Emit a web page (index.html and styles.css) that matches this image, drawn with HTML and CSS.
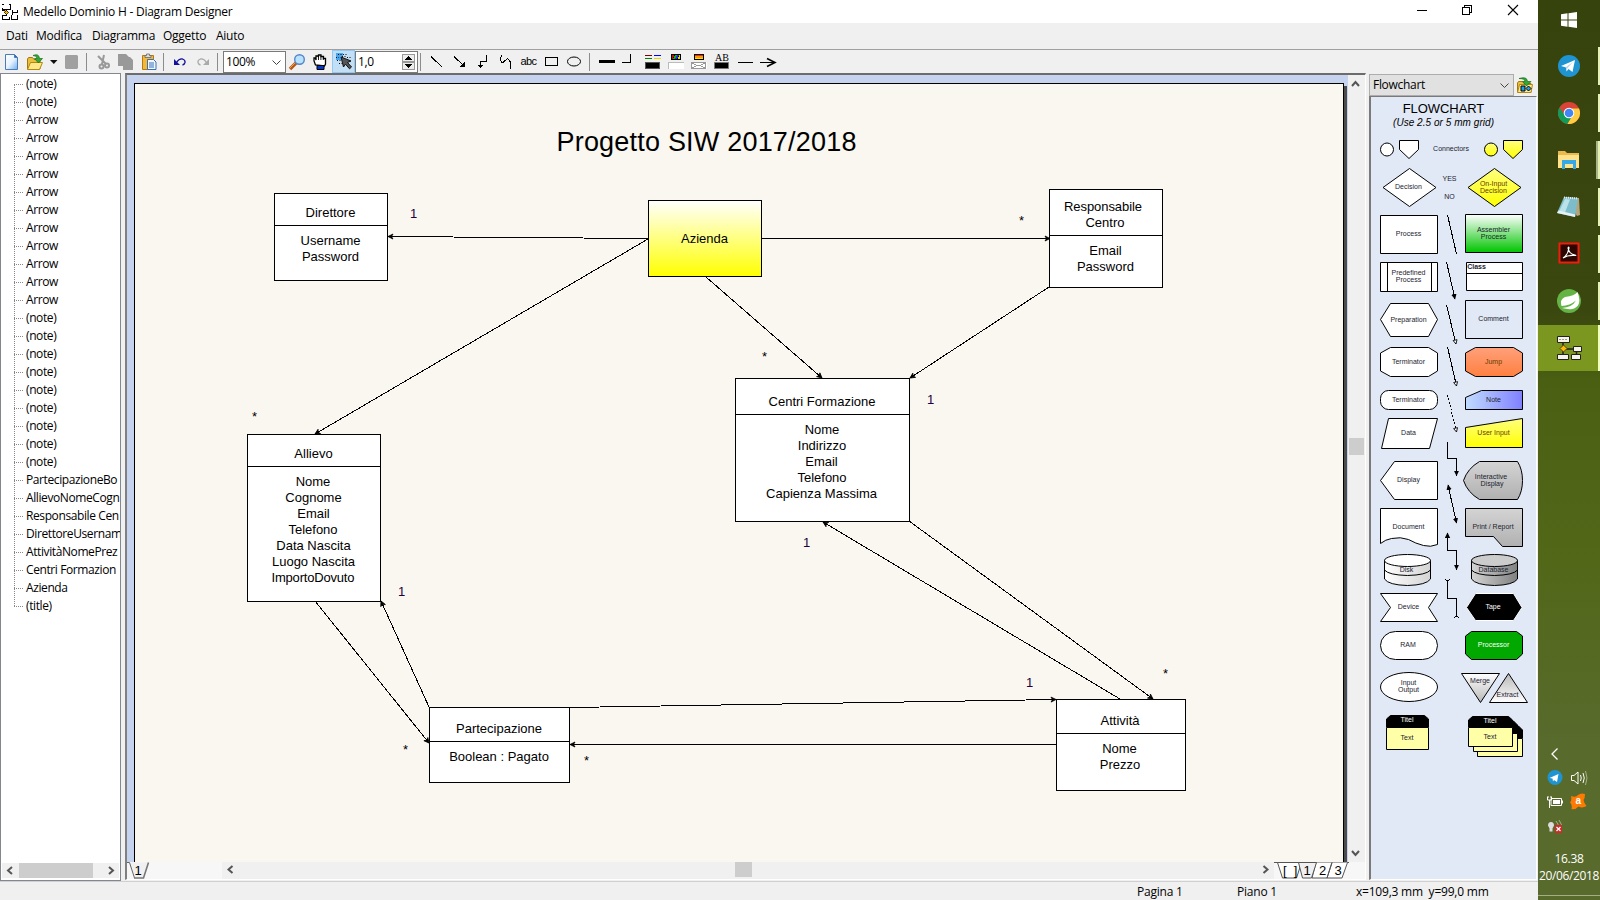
FILE: index.html
```html
<!DOCTYPE html>
<html lang="it">
<head>
<meta charset="utf-8">
<title>Medello Dominio H - Diagram Designer</title>
<link rel="stylesheet" href="styles.css">
</head>
<body>
<div class="window">
  <header class="titlebar">
    <svg class="app-icon" viewBox="0 0 20 22" shape-rendering="crispEdges"><path d="M2 3.500h2M9 3.500h1.500v5M2.500 7v2.500h3M6 12.500v2h-3.500v4h7v-3M12.500 9v5M13 11.500h4.500v-3M11.500 14v4.500h6v-4h-1M2 8.500h8" fill="none" stroke="#000"/><path d="M6 8.500l2.500 2.500-2.500 2.500-2.500-2.500z" fill="#f5b800" stroke="#000" stroke-width=".7"/></svg>
    <span class="title-text">Medello Dominio H - Diagram Designer</span>
    <svg class="controls" viewBox="1400 0 138 23" fill="none" stroke="#000" shape-rendering="crispEdges"><path d="M1417 10.500h10M1462.500 7.500h7v7h-7zM1464.500 7v-1.500h7v7h-2"/><path d="M1508 5l10 10M1518 5l-10 10" shape-rendering="auto" stroke-width="1.100"/></svg>
  </header>
  <nav class="menubar"><span class="m1">Dati</span><span class="m2">Modifica</span><span class="m3">Diagramma</span><span class="m4">Oggetto</span><span class="m5">Aiuto</span></nav>
  <div class="toolbar">
    <svg width="23" height="23" viewBox="0 50 23 23"><defs><linearGradient id="doc" x2="1" y2="1"><stop stop-color="#fff"/><stop offset=".5" stop-color="#e6f2ff"/><stop offset="1" stop-color="#6fb0ee"/></linearGradient></defs><path d="M5.500 54.500h9l3 3v12h-12z" fill="url(#doc)" stroke="#4a7ab8"/><path d="M14.500 54.500v3h3" fill="#2f68b0" stroke="#4a7ab8"/></svg>
    <svg width="23" height="23" viewBox="23 50 23 23"><path d="M27.500 69v-10l1-1.500h4l1.500 2h6v9.500z" fill="#e9bf3e" stroke="#a87708"/><path d="M27.500 69.500l3-7h12l-3 7z" fill="#ffe88a" stroke="#b58612"/><path d="M33 55.500q6-2.500 6.500 3h3l-4 4.500-4-4.500h2.500q0-3-4-3z" fill="#35a535" stroke="#13701a" stroke-width=".7"/></svg>
    <svg width="14" height="23" viewBox="46 50 14 23"><path d="M50 60h7.500l-3.700 4z" fill="#111"/></svg>
    <svg width="23" height="23" viewBox="60 50 23 23"><path d="M66 55h11l1 1v12l-1 1h-11l-1-1v-12z" fill="#a0a0a0"/></svg>
    <svg class="sep" width="9" height="23" viewBox="83 50 9 23"><path d="M86.500 53v18"/></svg>
    <svg width="23" height="23" viewBox="92 50 23 23" fill="none" stroke="#999" stroke-width="2"><path d="M98 56l8 8M104 55l-2 9"/><circle cx="101.500" cy="66.500" r="2"/><circle cx="107" cy="65.500" r="2"/></svg>
    <svg width="23" height="23" viewBox="115 50 23 23"><path d="M118 54h8l3 3h1l3 3v10h-10v-4h-5z" fill="#999"/></svg>
    <svg width="22" height="23" viewBox="138 50 22 23"><path d="M142.500 55.500h11v14h-11z" fill="#f1b83a" stroke="#b37913"/><path d="M145 57.500v-2h1.500v-1.500h3v1.500h1.500v2z" fill="#ddd" stroke="#666" stroke-width=".8"/><path d="M147.500 59.500h6l2.500 2.500v7.500h-8.500z" fill="#eef6ff" stroke="#3970b8"/><path d="M149 63h5M149 65h5M149 67h5" stroke="#3970b8"/></svg>
    <svg class="sep" width="9" height="23" viewBox="160 50 9 23"><path d="M163.500 53v18"/></svg>
    <svg width="23" height="23" viewBox="169 50 23 23"><path d="M174 59v6h6z" fill="#12129a"/><path d="M176.500 62.500q2.500-4 6-3.500 3 1 2.500 3.500-.5 2-2.500 2.500" fill="none" stroke="#12129a" stroke-width="1.300"/></svg>
    <svg width="22" height="23" viewBox="192 50 22 23"><path d="M209 59v6h-6z" fill="#aaa"/><path d="M206.500 62.500q-2.500-4-6-3.500-3 1-2.500 3.500 .5 2 2.500 2.500" fill="none" stroke="#aaa" stroke-width="1.300"/></svg>
    <svg class="sep" width="9" height="23" viewBox="214 50 9 23"><path d="M217.500 53v18"/></svg>
    <div class="zoom-box"><span>100%</span><svg width="11" height="7" viewBox="0 0 11 7"><path d="M1.500 1.500l4 4 4-4" fill="none" stroke="#444"/></svg></div>
    <svg width="23" height="23" viewBox="286 50 23 23"><path d="M290 69l6-6" stroke="#b4591a" stroke-width="3.400"/><path d="M290 68l6-6" stroke="#f0a04a" stroke-width="1"/><circle cx="299.500" cy="59.500" r="4.800" fill="#b9e2ff" stroke="#5585c8" stroke-width="1.400"/></svg>
    <svg width="23" height="23" viewBox="309 50 23 23"><path d="M315.500 65l-1.500-4v-3h1.500l.500 2v-4h2l.500 1v-2h2.500v1.500h2.500v2h2v5.500l-1 2z" fill="#fff" stroke="#000" stroke-width="1.300"/><path d="M318.500 56v4M320.900 56v4M323.300 57v3" stroke="#000" stroke-width=".9"/><path d="M317 65.500h7v4h-7z" fill="#0038c8" stroke="#000"/></svg>
    <svg class="pressed" width="23" height="23" viewBox="332 50 23 23"><path d="M336 53h7v7h-7z" fill="#47a7ee"/><path d="M338 54.500h10M336 57.500h3M337 60.500h4M339 63.500h4M347 57.500h4M342 56.500h4" stroke="#111" stroke-dasharray="1 1.500" fill="none"/><path d="M341 57l10 4-3.500 1.500 4 4.500-2 1.800-4-4.600-2 2.800z" fill="#555" stroke="#111"/></svg>
    <div class="spin"><span>1,0</span><svg width="13" height="16" viewBox="0 0 13 16" shape-rendering="crispEdges"><path d="M.5.500h12v7h-12zM.5 8.500h12v7h-12z" fill="#ededed" stroke="#999"/><path d="M3 6h7l-3.500-4zM3 10h7l-3.500 4z"/></svg></div>
    <svg class="sep" width="7" height="23" viewBox="418 50 7 23"><path d="M420.500 53v18"/></svg>
    <svg class="line" width="23" height="23" viewBox="425 50 23 23"><path d="M431 56.500l11 10.500"/></svg>
    <svg class="line" width="23" height="23" viewBox="448 50 23 23"><path d="M454 56.500l10 9.500"/><path d="M465 61v6h-6z" fill="#000" stroke="none"/></svg>
    <svg class="line" width="23" height="23" viewBox="471 50 23 23"><path d="M486.500 55v6.500h-6v5"/><path d="M477.500 64.500h6l-3 4z" fill="#000" stroke="none"/></svg>
    <svg class="line" width="23" height="23" viewBox="494 50 23 23"><path d="M501.500 55l-1 5 1 2h2l4-3.500 2.500 3v7"/></svg>
    <svg width="23" height="23" viewBox="517 50 23 23"><text x="520.500" y="65" class="abc" textLength="16.500">abc</text></svg>
    <svg class="line" width="23" height="23" viewBox="540 50 23 23"><path d="M545.500 57.500h12v8h-12z"/></svg>
    <svg class="line smooth" width="23" height="23" viewBox="563 50 23 23"><ellipse cx="574" cy="61.500" rx="6.500" ry="4.500"/></svg>
    <svg class="sep" width="9" height="23" viewBox="586 50 9 23"><path d="M589.500 53v18"/></svg>
    <svg width="23" height="23" viewBox="595 50 23 23"><path d="M599 60h16v3h-16z"/></svg>
    <svg class="line" width="23" height="23" viewBox="618 50 23 23"><path d="M622 62.500h8.500v-8.500"/></svg>
    <svg width="23" height="23" viewBox="641 50 23 23" shape-rendering="crispEdges"><path d="M645 55.500h7" stroke="#800000"/><path d="M654 55.500h7" stroke="#00f"/><path d="M645 58.500h7" stroke="#008000"/><path d="M654 58.500h7" stroke="#e8d800"/><path d="M645.500 62.500h14v6h-14z" stroke="#555"/></svg>
    <svg width="23" height="23" viewBox="664 50 23 23" shape-rendering="crispEdges"><path d="M671 54h10v6h-10z"/><path d="M672 55h2l-1 4h-1z" fill="#d00"/><path d="M675 55h2l-2 4h-2z" fill="#0b0"/><path d="M677 55h2l-2 4h-2z" fill="#22f"/><path d="M679 55h1v4h-2z" fill="#dd0"/><path d="M668 62h16v7h-16z" fill="#fff"/><path d="M668 62.500h16M668.500 62v7" stroke="#bbb"/></svg>
    <svg width="23" height="23" viewBox="687 50 23 23" shape-rendering="crispEdges"><path d="M694.500 54.500h9v5h-9z" fill="#f90" stroke="#000"/><path d="M695 55h8v1h-8z" fill="#e22"/><path d="M695 58h8v1h-8z" fill="#fd0"/><path d="M691 62h16v7h-16z" fill="#fff"/><path d="M691.500 62.500h14v6h-14zM692 63l5 2.500-5 2.500M705 63l-5 2.500 5 2.500M697 65.500h4" fill="none" stroke="#999"/></svg>
    <svg width="23" height="23" viewBox="710 50 23 23"><text x="715" y="61" class="serif-ab" textLength="14">AB</text><path d="M714.500 62.500h14v6h-14z" stroke="#777"/></svg>
    <svg class="line" width="23" height="23" viewBox="733 50 23 23"><path d="M738 62.500h15"/></svg>
    <svg class="line" width="23" height="23" viewBox="756 50 23 23"><path d="M760 62.500h14"/><path d="M767 58.500l8 4-8 4" stroke-width="1.600" shape-rendering="auto"/></svg>
  </div>
  <main class="workspace">
    <aside class="tree">
      <ul>
        <li>(note)</li><li>(note)</li>
        <li>Arrow</li><li>Arrow</li><li>Arrow</li><li>Arrow</li><li>Arrow</li><li>Arrow</li><li>Arrow</li><li>Arrow</li><li>Arrow</li><li>Arrow</li><li>Arrow</li>
        <li>(note)</li><li>(note)</li><li>(note)</li><li>(note)</li><li>(note)</li><li>(note)</li><li>(note)</li><li>(note)</li><li>(note)</li>
        <li>PartecipazioneBo</li><li>AllievoNomeCogn</li><li>Responsabile Cen</li><li>DirettoreUsernam</li><li>AttivitàNomePrez</li><li>Centri Formazion</li><li>Azienda</li><li>(title)</li>
      </ul>
      <div class="hbar"><svg width="17" height="15"><path d="M10 4l-4 3.500 4 3.500" class="chev"/></svg><i class="thumb"></i><svg class="end" width="17" height="15"><path d="M7 4l4 3.500-4 3.500" class="chev"/></svg></div>
    </aside>
    <section class="canvas">
      <div class="canvas-row">
        <svg class="diagram" width="1221" height="787" viewBox="127 75 1221 787">
          <defs>
            <linearGradient id="yel" x2="0" y2="1"><stop stop-color="#fff"/><stop offset="1" stop-color="#ff0"/></linearGradient>
            <marker id="arr" viewBox="0 0 8 8" refX="7" refY="4" markerWidth="8" markerHeight="8" markerUnits="userSpaceOnUse" orient="auto"><path d="M2 1.500l5 2.500-5 2.500 1.500-2.500z" stroke="#000" stroke-width=".8"/></marker>
          </defs>
          <path d="M1344 86h3v776h-3z" fill="#4c4c4c"/>
          <path d="M134.500 863v-779.500h1209v779.500" fill="#faf7f0" stroke="#000" shape-rendering="crispEdges"/>
          <text class="heading" x="706.500" y="151" textLength="300">Progetto SIW 2017/2018</text>
          <g class="links">
            <path d="M648 238.500L388 236.500"/><path d="M762 238.500H1050"/><path d="M648 239L315 434"/><path d="M706 277L822 378"/><path d="M1049 287L910 378"/><path d="M909 521L1153 699"/><path d="M1120 699L823 522"/><path d="M315 601L429 743"/><path d="M429 707L381 601"/><path d="M570 707.500L1056 699.500"/><path d="M1056 744.500H570"/>
          </g>
          <g class="nodes">
            <path d="M274.500 193.500h113v87h-113zM274.500 225.500h113"/>
            <path d="M648.500 200.500h113v76h-113z" fill="url(#yel)"/>
            <path d="M1049.500 189.500h113v98h-113zM1049.500 235.500h113"/>
            <path d="M735.500 378.500h174v143h-174zM735.500 414.500h174"/>
            <path d="M247.500 434.500h133v167h-133zM247.500 466.500h133"/>
            <path d="M429.500 707.500h140v75h-140zM429.500 741.500h140"/>
            <path d="M1056.500 699.500h129v91h-129zM1056.500 733.500h129"/>
          </g>
          <g class="labels">
            <text x="330.500" y="217">Direttore</text><text x="330.500" y="245">Username</text><text x="330.500" y="261">Password</text>
            <text x="704.500" y="243">Azienda</text>
            <text x="1103" y="211" textLength="78">Responsabile</text><text x="1105" y="227">Centro</text><text x="1105.500" y="255">Email</text><text x="1105.500" y="271">Password</text>
            <text x="822" y="406">Centri Formazione</text><text x="822" y="434">Nome</text><text x="822" y="450">Indirizzo</text><text x="821.500" y="466">Email</text><text x="822" y="482">Telefono</text><text x="821.500" y="498" textLength="111">Capienza Massima</text>
            <text x="313.500" y="458">Allievo</text><text x="313" y="486">Nome</text><text x="313.500" y="502">Cognome</text><text x="313.500" y="518">Email</text><text x="313" y="534">Telefono</text><text x="313.500" y="550">Data Nascita</text><text x="313.500" y="566">Luogo Nascita</text><text x="313" y="582" textLength="83">ImportoDovuto</text>
            <text x="499" y="733">Partecipazione</text><text x="499" y="761">Boolean : Pagato</text>
            <text x="1120" y="725">Attività</text><text x="1119.500" y="753">Nome</text><text x="1120" y="769">Prezzo</text>
            <g fill="#200040"><text x="413.500" y="218">1</text><text x="930.500" y="404">1</text><text x="401.500" y="596">1</text><text x="1029.500" y="687">1</text><text x="806.500" y="547">1</text></g>
            <text x="1021.500" y="225">*</text><text x="764.500" y="361">*</text><text x="254.500" y="421">*</text><text x="405.500" y="754">*</text><text x="586.500" y="765">*</text><text x="1165.500" y="678">*</text>
          </g>
        </svg>
        <div class="vbar"><svg width="17" height="17"><path d="M4 11l3.500-4 3.500 4" class="chev"/></svg><i class="thumb"></i><svg class="end" width="17" height="17"><path d="M4 6l3.500 4 3.500-4" class="chev"/></svg></div>
      </div>
      <div class="canvas-foot">
        <svg width="95" height="17" viewBox="127 862 95 17"><path d="M127 862.500h2l5.500 15.500h8l5.500-15.500z" fill="#f0f0f0"/><path d="M127 862.500h2.500l5 15.500" fill="none" stroke="#666"/><path d="M134 878h9.500l5-15.500" fill="none" stroke="#777" stroke-width="1.600"/><text class="tab" x="134.500" y="875">1</text></svg>
        <div class="hbar"><svg width="17" height="17"><path d="M10.500 4l-4 3.500 4 3.500" class="chev"/></svg><i class="thumb"></i><svg class="end" width="17" height="17"><path d="M6.500 4l4 3.500-4 3.500" class="chev"/></svg></div>
        <svg width="91" height="17" viewBox="1274 862 91 17" fill="#fff" stroke="#555"><path d="M1274 862.500h75"/><path d="M1277.500 862.500l5 15.500h14l5-15.500zM1316 862.500l-4 15.500h15l5-15.500M1332 862.500l-5 15.500h15l5.500-15.500"/><path d="M1298.500 862.500l4 15.500h9l5-15.500z" fill="#f0f0f0"/><g fill="#000" stroke="none"><text class="tab" x="1283" y="875">[&#160; ]</text><text class="tab" x="1303.500" y="875">1</text><text class="tab" x="1319" y="875">2</text><text class="tab" x="1334.500" y="875">3</text></g></svg>
      </div>
    </section>
    <aside class="palette">
      <div class="palette-head"><div class="select"><span>Flowchart</span><svg width="11" height="7" viewBox="0 0 11 7"><path d="M1.500 1.500l4 4 4-4" fill="none" stroke="#444"/></svg></div>
        <svg width="24" height="22" viewBox="1514 73 24 22"><path d="M1517.500 91v-9l1-1.500h4l1.500 2h7v9z" fill="#e9bf3e" stroke="#a87708"/><path d="M1517.500 91.500l2-8h13l-1.500 8z" fill="#ffe88a" stroke="#b58612"/><path d="M1519 77.500q8-2.500 8.500 3h3.500l-4.500 4.500-4-4.500h2.500q0-3-6-3z" fill="#35a535" stroke="#13701a" stroke-width=".7"/><path d="M1521 85h4v5h-4z" fill="#18a0f0" stroke="#000"/><path d="M1528.500 85l2.500 2.500-2.500 2.500-2.500-2.500z" fill="#18a0f0" stroke="#000"/></svg></div>
      <div class="palette-body">
        <svg width="165" height="783" viewBox="1371 97 165 783">
          <defs>
            <linearGradient id="yl2" x2="0" y2="1"><stop stop-color="#ffff80"/><stop offset="1" stop-color="#ff0"/></linearGradient>
            <linearGradient id="grn" x2="0" y2="1"><stop stop-color="#fff"/><stop offset="1" stop-color="#00c400"/></linearGradient>
            <linearGradient id="org" x2="0" y2="1"><stop stop-color="#ffa07a"/><stop offset="1" stop-color="#ff8040"/></linearGradient>
            <linearGradient id="blu"><stop stop-color="#c0dcff"/><stop offset="1" stop-color="#8080ff"/></linearGradient>
            <linearGradient id="gry" x2="0" y2="1"><stop stop-color="#d4d4d4"/><stop offset="1" stop-color="#b0b0b0"/></linearGradient>
            <linearGradient id="dsk"><stop stop-color="#fff"/><stop offset="1" stop-color="#d4d4d4"/></linearGradient>
            <linearGradient id="dbs"><stop stop-color="#d4d4d4"/><stop offset="1" stop-color="#808080"/></linearGradient>
            <linearGradient id="mrg" x2="0" y2="1"><stop stop-color="#fff"/><stop offset="1" stop-color="#b8b8b8"/></linearGradient>
            <linearGradient id="ext" x2="0" y2="1"><stop stop-color="#b8b8b8"/><stop offset="1" stop-color="#fff"/></linearGradient>
            <marker id="pa" viewBox="0 0 6 6" refX="5" refY="3" markerWidth="6" markerHeight="6" markerUnits="userSpaceOnUse" orient="auto-start-reverse"><path d="M0 .3l5.500 2.700-5.500 2.700z"/></marker>
            <marker id="po" viewBox="0 0 6 6" refX="5" refY="3" markerWidth="6" markerHeight="6" markerUnits="userSpaceOnUse" orient="auto"><path d="M1 1l4 2-4 2z" fill="#fff" stroke="#000" stroke-width=".8"/></marker>
          </defs>
          <text x="1443.500" y="112.500" class="p-title" textLength="81.500">FLOWCHART</text>
          <text x="1443.500" y="126" class="p-sub" textLength="101">(Use 2.5 or 5 mm grid)</text>
          <g class="shapes">
            <circle cx="1387" cy="149.500" r="6.500"/><path d="M1399.500 140.500h19v9l-9.500 9-9.500-9z"/>
            <circle cx="1491" cy="149.500" r="6.500" fill="url(#yl2)"/><path d="M1503.500 140.500h19v9l-9.500 9-9.500-9z" fill="url(#yl2)"/>
            <path d="M1409.500 168.500l26.500 19-26.500 19-26.500-19z"/><path d="M1494.500 168.500l26.500 19-26.500 19-26.500-19z" fill="url(#yl2)"/>
            <path d="M1380.500 215.500h57v38h-57z"/><path d="M1465.500 214.500h57v38h-57z" fill="url(#grn)"/>
            <path d="M1380.500 262.500h57v29h-57zM1387.500 262.500v29M1431.500 262.500v29"/><path d="M1466.500 262.500h56v28h-56zM1466.500 273.500h56"/>
            <path d="M1390.500 303.500h38l9 16-9 17h-38l-10-17z"/><path d="M1465.500 300.500h57v38h-57z" fill="none"/>
            <path d="M1390.500 347.500h38l9 5.500v18l-9 5.500h-38l-10-5.500v-18z"/><path d="M1475.500 347.500h38l9 5.500v18l-9 5.500h-38l-10-5.500v-18z" fill="url(#org)"/>
            <rect x="1380.500" y="390.500" width="57" height="19" rx="8"/><path d="M1465.500 409.500v-12l16-7h41v19z" fill="url(#blu)"/>
            <path d="M1388.500 418.500h49l-8 30h-48z"/><path d="M1465.500 447.500v-20l57-9v29z" fill="url(#yl2)"/>
            <path d="M1380.500 480.500l14-19h43v38h-43z"/><path d="M1463.500 480.500q4-12 16-19h38q5 8 5 19t-5 19h-38q-12-7-16-19z" fill="url(#gry)"/>
            <path d="M1380.500 508.500h57v36q-7 3-14 1-8-2-15-6-8-3-17-1-6 1-11 5z"/><path d="M1465.500 508.500h57v38h-20l-9-10h-28z" fill="url(#gry)"/>
            <path d="M1384.500 560v19q4 6 23 6.500 19-.5 23-6.500v-19z" fill="url(#dsk)"/><ellipse cx="1407.500" cy="560.500" rx="23" ry="6"/><path d="M1384.500 570q4 5 23 5.500 19-.5 23-5.500" fill="none"/>
            <path d="M1471.500 560v19q4 6 23 6.500 19-.5 23-6.500v-19z" fill="url(#dbs)"/><ellipse cx="1494.500" cy="560.500" rx="23" ry="6" fill="#ccc"/><path d="M1471.500 570q4 5 23 5.500 19-.5 23-5.500" fill="none"/>
            <path d="M1380.500 593.500h57l-9 14 9 14h-57l10-14z"/><path d="M1475.500 593.500h38l8.500 14-8.500 13h-38l-9-13z" fill="#000" stroke="#fff"/>
            <rect x="1380.500" y="631.500" width="57" height="28" rx="15"/><path d="M1471.500 631.500h45l6 4.500v18l-6 5.500h-45l-6-5.500v-18z" fill="#00a800"/>
            <ellipse cx="1409" cy="687" rx="28.500" ry="14.500"/><path d="M1461.500 673.500h38l-19 29z" fill="url(#mrg)"/><path d="M1508.500 673.500l19 29h-38z" fill="url(#ext)"/>
            <path d="M1386.500 727v-8l4-3.500h34l4 3.500v8z" fill="#000"/><path d="M1386.500 727.500h42v22h-42z" fill="#ffffa8"/>
            <path d="M1477.500 738v-12h41l4 4v8z" fill="#000"/><path d="M1477.500 738.500h45v18h-45z" fill="#ffffa8"/>
            <path d="M1473.500 733v-12h40l4 4v8z" fill="#000"/><path d="M1473.500 733.500h44v18h-44z" fill="#ffffa8"/>
            <path d="M1468.500 727v-7l4-3.500h36l4 3.500v8z" fill="#000"/><path d="M1468.500 727.500h44v19h-44z" fill="#ffffa8"/>
          </g>
          <g class="conn">
            <path d="M1447.500 215l9 39"/><path d="M1446.500 262l8.500 37" marker-end="url(#pa)"/><path d="M1446.500 305l9.500 39" marker-end="url(#po)"/><path d="M1447.500 347l9 39" marker-end="url(#po)"/><path d="M1447.500 395l9 37" stroke-dasharray="2 1.500" marker-end="url(#po)"/>
            <path d="M1447.500 442v16.500h9v17" marker-end="url(#pa)"/><path d="M1448 485l8.500 38" marker-start="url(#pa)" marker-end="url(#pa)"/><path d="M1447.500 533v17.500h9v19" marker-start="url(#pa)" marker-end="url(#pa)"/><path d="M1447.500 580v18.500h9v18M1445.500 579l2 3 2-3M1454.500 618l2-3 2 3"/>
          </g>
          <g class="p-labels">
            <text x="1451" y="151">Connectors</text><text x="1449.500" y="181">YES</text><text x="1449.500" y="199">NO</text>
            <text x="1408.500" y="189">Decision</text><text x="1493.500" y="186" class="brown">On-Input</text><text x="1493.500" y="193" class="brown">Decision</text>
            <text x="1408.500" y="236">Process</text><text x="1493.500" y="232">Assembler</text><text x="1493.500" y="239">Process</text>
            <text x="1408.500" y="275">Predefined</text><text x="1408.500" y="282">Process</text><text x="1476.500" y="269" class="bold">Class</text>
            <text x="1408.500" y="322">Preparation</text><text x="1493.500" y="321">Comment</text><text x="1408.500" y="364">Terminator</text><text x="1493.500" y="364" class="brown">Jump</text>
            <text x="1408.500" y="402">Terminator</text><text x="1493.500" y="402">Note</text><text x="1408.500" y="435">Data</text><text x="1493.500" y="435" class="brown">User Input</text>
            <text x="1408.500" y="482">Display</text><text x="1491" y="479">Interactive</text><text x="1492" y="486">Display</text><text x="1408.500" y="529">Document</text><text x="1493" y="529">Print / Report</text>
            <text x="1406.500" y="572">Disk</text><text x="1493.500" y="572">Database</text><text x="1408.500" y="609">Device</text><text x="1493" y="609" class="inv">Tape</text>
            <text x="1408" y="647">RAM</text><text x="1493.500" y="647" class="inv">Processor</text><text x="1408.500" y="685">Input</text><text x="1408.500" y="692">Output</text>
            <text x="1480" y="683">Merge</text><text x="1507.500" y="697">Extract</text>
            <text x="1407" y="722" class="inv">Titel</text><text x="1407" y="740">Text</text><text x="1490" y="723" class="inv">Titel</text><text x="1490" y="739">Text</text>
          </g>
        </svg>
      </div>
    </aside>
  </main>
  <footer class="statusbar"><span class="s1">Pagina 1</span><span class="s2">Piano 1</span><span class="s3">x=109,3 mm&nbsp; y=99,0 mm</span></footer>
</div>
<aside class="taskbar">
  <div class="start"><svg width="18" height="18" viewBox="0 0 18 18" fill="#fff"><path d="M1 3.300l6.500-1v6.200h-6.500zM8.500 2.200l8.500-1.200v7.500h-8.500zM1 9.500h6.500v6.200l-6.500-1zM8.500 9.500h8.500v7.500l-8.500-1.200z"/></svg></div>
  <div class="task"><svg width="24" height="24" viewBox="0 0 24 24"><circle cx="12" cy="12" r="11" fill="#1e94d2"/><path d="M4 12l14-6-2.500 12-4-3-2 2.500-.5-4z" fill="#fff"/><path d="M9 13l7-5-5.500 6-1 3z" fill="#b5d5e8"/></svg></div>
  <div class="task"><svg width="24" height="24" viewBox="0 0 24 24"><circle cx="12" cy="12" r="11" fill="#da4437"/><path d="M2.500 6.500a11 11 0 0 0 8 16.400l5-8.400-7.500 0z" fill="#119b58"/><path d="M22 7.500a11 11 0 0 1-11.500 15.400l5-8.600-.5-6.800z" fill="#ffcd42"/><circle cx="12" cy="12" r="5.300" fill="#fff"/><circle cx="12" cy="12" r="4.300" fill="#4285f4"/></svg></div>
  <div class="task multi"><svg width="24" height="24" viewBox="0 0 24 24"><path d="M1 3h7l2 2h12v15h-21z" fill="#ecb94f"/><path d="M1 7h21v13h-21z" fill="#ffe28a"/><path d="M5 21v-9h14v9h-3v-5h-8v5z" fill="#34a9e6"/></svg></div>
  <div class="task"><svg width="24" height="24" viewBox="0 0 24 24"><path d="M7 2l15 1 1 17-3 1z" fill="#b3a67c"/><path d="M7 2l14 1-3 19-18-4z" fill="#7dbccb"/><path d="M8 4l5 .5-5 13-6-1z" fill="#b9e3e8"/><path d="M0 18l18 4 .5-2.500-17-4z" fill="#e7f0f2"/><path d="M7 2.500l14 1" stroke="#e8e8e8" stroke-dasharray="1 1" stroke-width="2"/></svg></div>
  <div class="task adobe"><svg width="22" height="22" viewBox="0 0 22 22"><path d="M1.500 1.500h19v19h-19z" fill="#2c0600" stroke="#f21c0d" stroke-width="2"/><path d="M5 16q5-3 6-10 0-2-1 0 1 6 7 7 2 .500-1 .500-6-.500-11 2.500" fill="none" stroke="#fff" stroke-width="1.200"/></svg></div>
  <div class="task"><svg width="26" height="26" viewBox="0 0 26 26"><circle cx="13" cy="13" r="12" fill="#65b345"/><path d="M21.500 4q3.500 9 .5 13.500-3.500 4.500-10 3.500-4-.5-6-1 10-.5 14-7.500-6 5-14.500 5.500-2-6.500 3.500-9 9.500-1 12.500-5z" fill="#fff"/></svg></div>
  <div class="task active"><svg width="26" height="26" viewBox="0 0 26 26"><g fill="#f7f4e8" stroke="#222"><path d="M1.500 1.500h12v6h-12zM17.500 11.500h8v5h-8zM1.500 19.500h11v5h-11zM15.500 19.500h9v5h-9z"/></g><path d="M7 7v12M10 14h7M20.500 17v3" stroke="#222" stroke-width="1.500"/><path d="M7.500 10l3.500 3.500-3.500 3.500-3.500-3.500z" fill="#fb0" stroke="#542"/><path d="M3 4.500h9" stroke="#999" stroke-dasharray="2 1"/></svg></div>
  <div class="tray">
    <svg width="62" height="96" viewBox="1538 742 62 96">
      <path d="M1557.500 748.500l-5.500 5.500 5.500 5.500" fill="none" stroke="#fff" stroke-width="1.300"/>
      <circle cx="1555" cy="777.500" r="7.500" fill="#1e94d2"/><path d="M1549.500 778l9-4-1.500 8-3-2-1 1.500-.5-3z" fill="#fff"/>
      <path d="M1571.500 775.500h2.500l4-3.500v12l-4-3.500h-2.500zM1580.500 775q1.500 3 0 6M1583 773q2.500 5 0 10" fill="none" stroke="#fff"/><path d="M1585.500 771q3 7 0 14" fill="none" stroke="#a7b08c"/>
      <path d="M1551 798.500h10.500v7h-10.500zM1562.500 800.500v3M1547.500 797v3h4v-3M1549.500 800v8M1548 796v2M1551 796v2" fill="none" stroke="#fff"/><path d="M1553 800h7v4h-7z" fill="#fff"/>
      <path d="M1571 796q5 2 7-1 3-2.500 7-1 0 4-1.500 6 .5 3 3 6-4 2.500-8 .5-3 3.500-7 2.500 1-4-1.500-6.500 2-2.500 1-6.500z" fill="#ff7a00"/><text x="1575.500" y="804" class="avast">a</text>
      <path d="M1551 822q3 0 3 3.500l-1.500 3v3h-3v-3l-1.500-3q0-3.500 3-3.500z" fill="#ddd"/><path d="M1556 821q3 3 2 7M1559 820q4 5 2 9" fill="none" stroke="#a7b08c"/><path d="M1555 825h7v8h-7z" fill="#d32626"/><path d="M1556.500 827l4 4M1560.500 827l-4 4" stroke="#fff" stroke-width="1.300"/>
    </svg>
    <div class="clock"><span>16.38</span><span>20/06/2018</span></div>
    <div class="show-desktop"></div>
  </div>
</aside>
</body>
</html>
```

FILE: styles.css
```css
* { box-sizing: border-box; }
body {
  margin: 0;
  width: 1600px;
  height: 900px;
  overflow: hidden;
  display: flex;
  font: 12px/18px "Open Sans", "Noto Sans", sans-serif;
  color: #000;
}
svg { display: block; flex: none; }

.window {
  width: 1538px;
  height: 900px;
  display: flex;
  flex-direction: column;
  background: #f0f0f0;
  white-space: nowrap;
}
.titlebar { height: 23px; flex: none; display: flex; align-items: center; background: #fff; }
.app-icon { width: 20px; height: 22px; }
.title-text { margin-left: 3px; letter-spacing: -0.24px; }
.controls { width: 138px; height: 23px; margin-left: auto; }

.menubar {
  height: 27px;
  flex: none;
  display: flex;
  padding: 4px 0 0 6px;
  border-bottom: 1px solid #a0a0a0;
  letter-spacing: -0.25px;
}
.m1 { width: 30px; }
.m2 { width: 56px; }
.m3 { width: 71px; }
.m4 { width: 53px; }

.toolbar { height: 23px; flex: none; display: flex; }
.sep { fill: none; stroke: #8c8c8c; shape-rendering: crispEdges; }
.line { fill: none; stroke: #000; shape-rendering: crispEdges; }
.line text { stroke: none; }
.smooth { shape-rendering: auto; }
.pressed { background: #c2dff5; outline: 1px solid #90c8f6; outline-offset: -1px; }
.zoom-box, .spin {
  width: 63px;
  height: 22px;
  margin-top: 1px;
  display: flex;
  align-items: center;
  justify-content: space-between;
  border: 1px solid #7a7a7a;
  background: #fff;
  padding: 0 3px 0 2px;
  letter-spacing: -0.35px;
}
.spin { padding-right: 2px; }
.abc { font: 11px "Liberation Sans", sans-serif; }
.serif-ab { font: 10px "Liberation Serif", serif; }

.workspace { height: 808px; flex: none; display: flex; }
.tree {
  width: 121px;
  height: 808px;
  border: 1px solid #828790;
  background: #fff;
  overflow: hidden;
  display: flex;
  flex-direction: column;
}
.tree ul { margin: 1px 0 0; padding: 0 0 0 13px; list-style: none; flex: 1; }
.tree li {
  height: 18px;
  display: flex;
  align-items: center;
  background: repeating-linear-gradient(#888 0 1px, #fff 1px 2px) no-repeat 0 0 / 1px 100%;
  letter-spacing: -0.4px;
}
.tree li::before {
  content: "";
  width: 9px;
  height: 1px;
  margin-right: 3px;
  flex: none;
  background: repeating-linear-gradient(90deg, #888 0 1px, #fff 1px 2px);
}
.tree li:first-child { background-position: 0 10px; }
.tree li:last-child { background-size: 1px 9px; }
.hbar { height: 15px; margin: 0 1px 2px; display: flex; background: #f0f0f0; }
.hbar .thumb { width: 74px; background: #cdcdcd; }
.end { margin-left: auto; }
.chev { fill: none; stroke: #555; stroke-width: 2; }

.canvas {
  width: 1241px;
  height: 807px;
  margin-left: 4px;
  border-left: 2px solid #808080;
  border-top: 2px solid #6c6c6c;
  border-right: 1px solid #fff;
  border-bottom: 1px solid #fff;
  display: flex;
  flex-direction: column;
}
.canvas-row { height: 787px; display: flex; }
.diagram { background: #c6d3ef; }
.vbar { width: 17px; display: flex; flex-direction: column; background: #f0f0f0; }
.vbar .thumb { width: 15px; height: 17px; margin: 346px 0 0 1px; background: #cdcdcd; }
.vbar .end { margin: auto 0 0; }
.canvas-foot { height: 17px; display: flex; background: #f7f7f7; }
.canvas-foot .hbar { width: 1052px; height: 17px; margin: 0; }
.canvas-foot .thumb { width: 17px; height: 15px; margin: 0 0 0 496px; }
.tab { font: 13px "Liberation Sans", sans-serif; stroke: none; }

.heading { font: 27px "Liberation Sans", Arial, sans-serif; text-anchor: middle; }
.links path { stroke: #000; fill: none; marker-end: url(#arr); shape-rendering: crispEdges; }
.nodes path { stroke: #000; shape-rendering: crispEdges; }
.nodes path:not([fill]) { fill: #fff; }
.labels { font: 13px "Liberation Sans", Arial, sans-serif; text-anchor: middle; }

.palette { width: 172px; height: 807px; padding-left: 3px; }
.palette-head { display: flex; height: 23px; padding-top: 1px; }
.select {
  width: 145px;
  height: 22px;
  display: flex;
  align-items: center;
  justify-content: space-between;
  padding: 0 3px 0 3px;
  background: #e1e1e1;
  border: 1px solid #adadad;
  letter-spacing: -0.3px;
}
.palette-body {
  width: 168px;
  height: 784px;
  border: 2px solid #7a7a7a;
  border-top-width: 1px;
  border-right: 1px solid #fff;
  border-bottom: 1px solid #fff;
  background: #e1e8f6;
  overflow: hidden;
}
.p-title { font: 13px "Liberation Sans", sans-serif; text-anchor: middle; }
.p-sub { font: italic 10px "Liberation Sans", sans-serif; text-anchor: middle; }
.shapes { fill: #fff; stroke: #000; }
.conn { fill: none; stroke: #000; shape-rendering: crispEdges; }
.p-labels { font: 7px "Liberation Sans", sans-serif; text-anchor: middle; fill: #1c2430; }
.p-labels .bold { font-weight: bold; }
.p-labels .brown { fill: #653c00; }
.p-labels .inv { fill: #fff; }

.statusbar {
  height: 19px;
  flex: none;
  display: flex;
  border-top: 1px solid #d0d0d0;
  padding: 1px 0 0 1137px;
  line-height: 17px;
  letter-spacing: -0.22px;
}
.s1 { width: 100px; }
.s2 { width: 119px; }

.taskbar {
  width: 62px;
  height: 900px;
  display: flex;
  flex-direction: column;
  background: linear-gradient(#37430d 0, #3a470f 310px, #4a5f12 380px, #526718 560px, #586a2c 740px, #586a2c 100%);
}
.start { height: 42px; display: flex; align-items: center; padding: 0 0 2px 22px; }
.task {
  height: 47px;
  display: flex;
  align-items: center;
  justify-content: center;
  background: linear-gradient(#e4f0b6, #e4f0b6) no-repeat right 5px / 2px 38px;
}
.task.multi { background: linear-gradient(90deg, #a9b584 0 2px, #4a5722 2px 2.500px, #e4f0b6 2.500px) no-repeat right 5px / 4px 38px; }
.task.adobe { padding-bottom: 2px; }
.task.active {
  background: linear-gradient(#f0ffbe, #f0ffbe) no-repeat right 1px / 2px 46px, linear-gradient(#7b971f, #7b971f) no-repeat 0 1px / 100% 46px;
}
.tray { margin-top: auto; }
.clock { display: flex; flex-direction: column; align-items: center; margin-top: 12px; height: 45px; color: #fff; line-height: 17px; letter-spacing: -0.35px; }
.avast { font: bold 10px "Liberation Sans", sans-serif; fill: #fff; }
.show-desktop { height: 5px; border-top: 1px solid #a3ae87; }
```
